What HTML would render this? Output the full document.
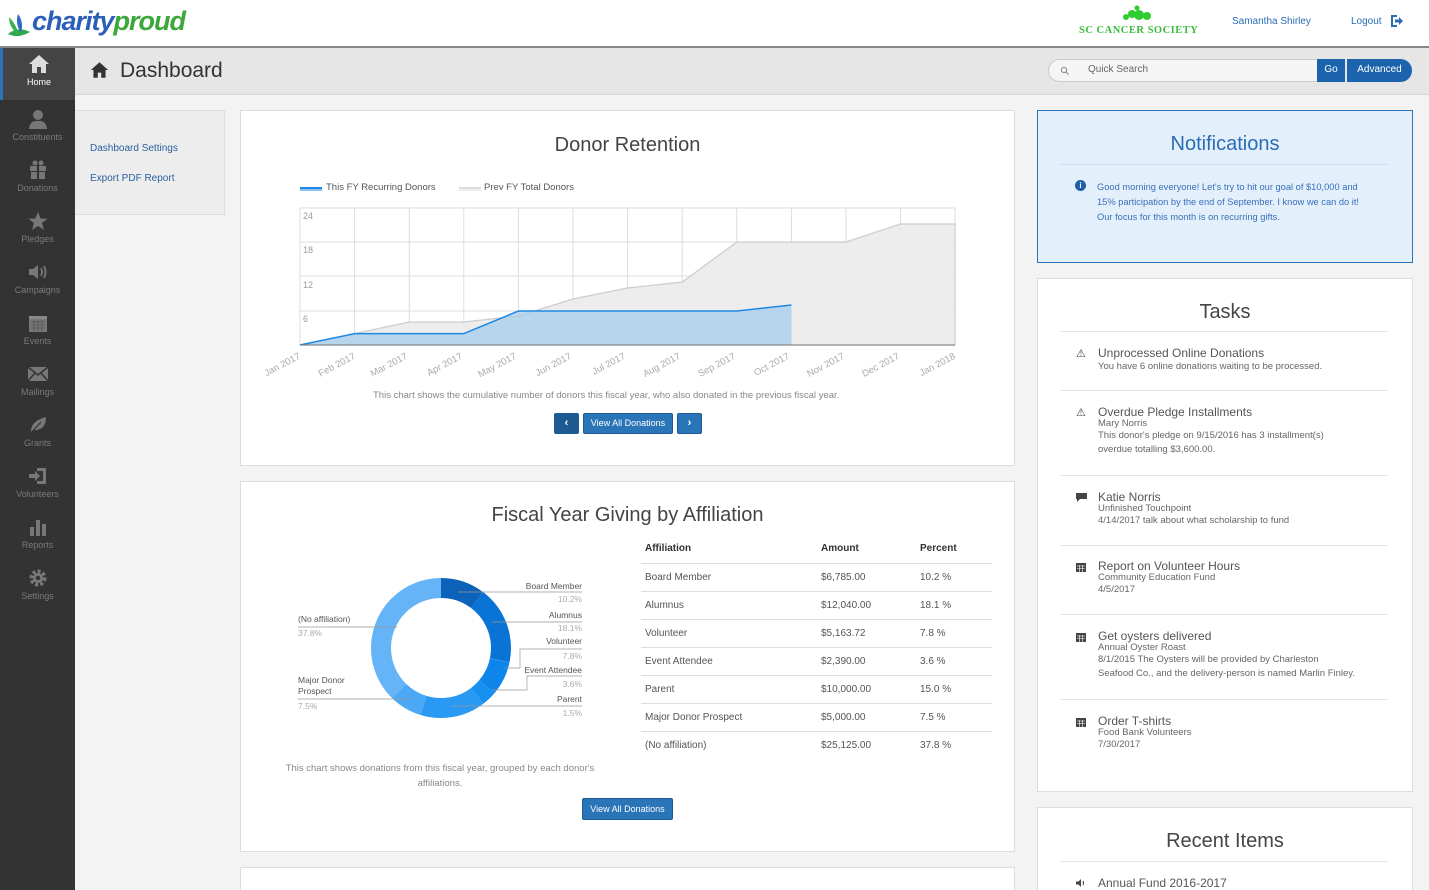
<!DOCTYPE html>
<html><head><meta charset="utf-8"><style>
*{box-sizing:border-box;margin:0;padding:0}
html,body{width:1429px;height:890px;overflow:hidden}
body{background:#f3f3f3;font-family:"Liberation Sans",sans-serif;position:relative;color:#555}
.abs{position:absolute}
#top{left:0;top:0;width:1429px;height:48px;background:#fff;border-bottom:2px solid #888}
#side{left:0;top:48px;width:75px;height:842px;background:#333}
.nav{position:absolute;left:0;width:75px;height:51px;text-align:center;color:#7a7a7a;font-size:9px}
.nav svg{display:block;margin:6px auto 3px}
#tbar{left:75px;top:48px;width:1354px;height:47px;background:#e6e6e6;border-bottom:1px solid #d6d6d6}
.card{position:absolute;background:#fff;border:1px solid #ddd}
h2{font-weight:normal;color:#444;text-align:center}
.btn{position:absolute;background:#2a74b8;color:#fff;font-size:9px;text-align:center;border:1px solid #1e5a92;border-radius:2px}
table{border-collapse:collapse;font-size:10px;color:#555}
td{height:28px;border-top:1px solid #ddd;padding-left:4px}
.task{position:absolute;left:60px;font-size:9.5px;color:#666;line-height:14px}
.task b{font-weight:normal;font-size:12px;color:#555;display:block;line-height:13px}
.ti{position:absolute;left:38px;font-size:11px;color:#444}
.sep{position:absolute;left:22px;width:328px;height:1px;background:#e5e5e5}
</style></head><body>
<div id="top" class="abs">
 <svg class="abs" style="left:6px;top:8px" width="30" height="32" viewBox="0 0 30 32"><path d="M2 26 Q12 18 24 24 Q12 31 2 26Z" fill="#2fa84f"/><path d="M12 6 Q18 14 15 25 Q9 16 12 6Z" fill="#2b6cc4"/><path d="M3 9 Q10 16 13 27 Q3 20 3 9Z" fill="#38b04a"/></svg>
 <div class="abs" style="left:32px;top:6px;font-size:27px;font-weight:bold;font-style:italic;letter-spacing:-1px"><span style="color:#2b5fb8">charity</span><span style="color:#3aa83a">proud</span></div>
 <svg class="abs" style="left:1120px;top:5px" width="36" height="18"><circle cx="6" cy="12" r="3" fill="#2ecc2e"/><circle cx="12" cy="9" r="4" fill="#2ecc2e"/><circle cx="19" cy="10" r="5" fill="#2ecc2e"/><circle cx="27" cy="11" r="4" fill="#2ecc2e"/><circle cx="17" cy="3" r="2.5" fill="#2ecc2e"/></svg>
 <div class="abs" style="left:1079px;top:25px;font-family:'Liberation Serif',serif;font-weight:bold;font-size:10.5px;color:#3bbb3b;letter-spacing:.5px">SC CANCER SOCIETY</div>
 <div class="abs" style="left:1232px;top:16px;font-size:10px;color:#2a6cb5">Samantha Shirley</div>
 <div class="abs" style="left:1351px;top:16px;font-size:10px;color:#2a6cb5">Logout</div>
 <svg class="abs" style="left:1391px;top:15px" width="13" height="12"><path d="M6 1 H1 V11 H6" stroke="#2a6cb5" stroke-width="2" fill="none"/><path d="M4 4.5 H8 V2 L12 6 L8 10 V7.5 H4Z" fill="#2a6cb5"/></svg>
</div>
<div id="side" class="abs">
 <div class="nav" style="top:0;background:#444;border-left:3px solid #2a74b8;color:#fff;height:52px"><svg width="22" height="20" viewBox="0 0 22 20"><path d="M11 1 L1 10 H4 V19 H9 V13 H13 V19 H18 V10 H21Z" fill="#ddd"/></svg>Home</div>
 <div class="nav" style="top:55px"><svg width="20" height="20"><circle cx="10" cy="6" r="5" fill="#777"/><path d="M1 20 Q2 11 10 12 Q18 11 19 20Z" fill="#777"/></svg>Constituents</div>
 <div class="nav" style="top:106px"><svg width="20" height="20"><rect x="2" y="6" width="16" height="5" fill="#777"/><rect x="3" y="12" width="14" height="7" fill="#777"/><rect x="9" y="5" width="2" height="14" fill="#333"/><circle cx="7" cy="3" r="2.5" fill="#777"/><circle cx="13" cy="3" r="2.5" fill="#777"/></svg>Donations</div>
 <div class="nav" style="top:157px"><svg width="20" height="20"><path d="M10 1 L12.6 7.5 L19.5 7.7 L14 12 L16 19 L10 15 L4 19 L6 12 L.5 7.7 L7.4 7.5Z" fill="#777"/></svg>Pledges</div>
 <div class="nav" style="top:208px"><svg width="22" height="20"><path d="M2 7 H6 L11 3 V17 L6 13 H2Z" fill="#777"/><path d="M14 6 Q16 10 14 14 M17 4 Q20 10 17 16" stroke="#777" stroke-width="1.8" fill="none"/></svg>Campaigns</div>
 <div class="nav" style="top:259px"><svg width="20" height="20"><rect x="1" y="3" width="18" height="16" fill="#777"/><rect x="1" y="3" width="18" height="3" fill="#888"/><path d="M3 9H17M3 12H17M3 15H17M6 7V18M10 7V18M14 7V18" stroke="#555" stroke-width=".7"/></svg>Events</div>
 <div class="nav" style="top:310px"><svg width="22" height="20"><rect x="1" y="3" width="20" height="14" fill="#777"/><path d="M1 3 L11 11 L21 3 M1 17 L8 9 M21 17 L14 9" stroke="#333" stroke-width="1.5" fill="none"/></svg>Mailings</div>
 <div class="nav" style="top:361px"><svg width="20" height="20"><path d="M3 18 Q2 6 18 2 Q18 16 5 15" fill="#777"/><path d="M2 19 L13 7" stroke="#333" stroke-width="1.2"/></svg>Grants</div>
 <div class="nav" style="top:412px"><svg width="22" height="20"><path d="M10 2 H19 V18 H10 V15 H16 V5 H10Z" fill="#777"/><path d="M2 8 H8 V5 L13 10 L8 15 V12 H2Z" fill="#777"/></svg>Volunteers</div>
 <div class="nav" style="top:463px"><svg width="20" height="20"><rect x="2" y="10" width="4" height="9" fill="#777"/><rect x="8" y="3" width="4" height="16" fill="#777"/><rect x="14" y="7" width="4" height="12" fill="#777"/></svg>Reports</div>
 <div class="nav" style="top:514px"><svg width="20" height="20"><circle cx="10" cy="10" r="6.5" fill="none" stroke="#777" stroke-width="4" stroke-dasharray="3 2"/><circle cx="10" cy="10" r="5" fill="#777"/><circle cx="10" cy="10" r="2.2" fill="#333"/></svg>Settings</div>
</div>
<div id="tbar" class="abs">
 <svg class="abs" style="left:15px;top:13px" width="19" height="18" viewBox="0 0 22 20"><path d="M11 1 L1 10 H4 V19 H9 V13 H13 V19 H18 V10 H21Z" fill="#333"/></svg>
 <div class="abs" style="left:45px;top:11px;font-size:21px;color:#333">Dashboard</div>
 <div class="abs" style="left:973px;top:11px;width:270px;height:23px;background:#f5f5f5;border:1px solid #ccc;border-radius:12px 0 0 12px"></div>
 <svg class="abs" style="left:985px;top:18px" width="9" height="9"><circle cx="4" cy="4" r="2.6" stroke="#888" fill="none"/><path d="M6 6 L8.5 8.5" stroke="#888"/></svg>
 <div class="abs" style="left:1013px;top:16px;font-size:10px;color:#666">Quick Search</div>
 <div class="abs" style="left:1242px;top:11px;width:28px;height:23px;background:#1c63ad;color:#fff;font-size:10px;text-align:center;line-height:22px">Go</div>
 <div class="abs" style="left:1272px;top:11px;width:65px;height:23px;background:#1c63ad;color:#fff;font-size:10px;text-align:center;line-height:22px;border-radius:0 12px 12px 0">Advanced</div>
</div>
<div class="abs" style="left:75px;top:110px;width:150px;height:105px;background:#ededed;border:1px solid #ddd;border-left:none">
 <div class="abs" style="left:15px;top:32px;font-size:10px;color:#2a5f9e">Dashboard Settings</div>
 <div class="abs" style="left:15px;top:62px;font-size:10px;color:#2a5f9e">Export PDF Report</div>
</div>

<div class="card" style="left:240px;top:110px;width:775px;height:356px">
 <h2 class="abs" style="left:0;width:773px;top:23px;font-size:20px">Donor Retention</h2>
 <div class="abs" style="left:59px;top:76px;width:22px;height:4px;background:#8cc4ee;border-top:2px solid #1e88e5"></div>
 <div class="abs" style="left:85px;top:71px;font-size:9.5px;color:#555">This FY Recurring Donors</div>
 <div class="abs" style="left:218px;top:76px;width:22px;height:4px;background:#eee;border-top:2px solid #ddd"></div>
 <div class="abs" style="left:243px;top:71px;font-size:9.5px;color:#555">Prev FY Total Donors</div>
 <div class="abs" style="left:132px;top:279px;font-size:9.5px;color:#888">This chart shows the cumulative number of donors this fiscal year, who also donated in the previous fiscal year.</div>
 <div class="btn" style="left:313px;top:302px;width:25px;height:21px;line-height:19px;background:#1e5a92;font-size:11px;font-weight:bold">&#8249;</div>
 <div class="btn" style="left:342px;top:302px;width:90px;height:21px;line-height:19px">View All Donations</div>
 <div class="btn" style="left:436px;top:302px;width:25px;height:21px;line-height:19px;font-size:11px;font-weight:bold">&#8250;</div>
</div>
<svg class="abs" style="left:255px;top:200px" width="720" height="190" viewBox="255 200 720 190">
 <g stroke="#ddd" stroke-width="1">
  <line x1="300" y1="208" x2="955" y2="208"/><line x1="300" y1="242" x2="955" y2="242"/><line x1="300" y1="276" x2="955" y2="276"/><line x1="300" y1="311" x2="955" y2="311"/>
  <line x1="300" y1="208" x2="300" y2="345"/><line x1="354.6" y1="208" x2="354.6" y2="345"/><line x1="409.2" y1="208" x2="409.2" y2="345"/><line x1="463.8" y1="208" x2="463.8" y2="345"/><line x1="518.4" y1="208" x2="518.4" y2="345"/><line x1="573" y1="208" x2="573" y2="345"/><line x1="627.6" y1="208" x2="627.6" y2="345"/><line x1="682.2" y1="208" x2="682.2" y2="345"/><line x1="736.8" y1="208" x2="736.8" y2="345"/><line x1="791.4" y1="208" x2="791.4" y2="345"/><line x1="846" y1="208" x2="846" y2="345"/><line x1="900.6" y1="208" x2="900.6" y2="345"/><line x1="955" y1="208" x2="955" y2="345"/>
 </g>
 <path d="M300 345 L354.6 333.6 L409.2 322 L463.8 322 L518.4 316 L573 299 L627.6 288 L682.2 282 L736.8 242 L791.4 242 L846 242 L900.6 224 L955 224 L955 345Z" fill="#ebebeb" fill-opacity=".9" stroke="#ccc" stroke-width="1.2"/>
 <path d="M300 345 L354.6 333.6 L409.2 333.6 L463.8 333.6 L518.4 311 L573 311 L627.6 311 L682.2 311 L736.8 311 L791.4 305 L791.4 345Z" fill="#9fcbec" fill-opacity=".7"/>
 <path d="M300 345 L354.6 333.6 L409.2 333.6 L463.8 333.6 L518.4 311 L573 311 L627.6 311 L682.2 311 L736.8 311 L791.4 305" fill="none" stroke="#1e88e5" stroke-width="1.5"/>
 <line x1="300" y1="345" x2="955" y2="345" stroke="#777" stroke-width="1"/>
 <g font-size="9" fill="#999" font-family="Liberation Sans"><text x="303" y="219">24</text><text x="303" y="253">18</text><text x="303" y="288">12</text><text x="303" y="322">6</text></g>
 <g font-size="9.5" fill="#aaa" font-family="Liberation Sans" text-anchor="end">
  <text transform="translate(301,358) rotate(-28)">Jan 2017</text><text transform="translate(356,358) rotate(-28)">Feb 2017</text><text transform="translate(408,358) rotate(-28)">Mar 2017</text><text transform="translate(463,358) rotate(-28)">Apr 2017</text><text transform="translate(517,358) rotate(-28)">May 2017</text><text transform="translate(572,358) rotate(-28)">Jun 2017</text><text transform="translate(626,358) rotate(-28)">Jul 2017</text><text transform="translate(681,358) rotate(-28)">Aug 2017</text><text transform="translate(736,358) rotate(-28)">Sep 2017</text><text transform="translate(790,358) rotate(-28)">Oct 2017</text><text transform="translate(845,358) rotate(-28)">Nov 2017</text><text transform="translate(900,358) rotate(-28)">Dec 2017</text><text transform="translate(956,358) rotate(-28)">Jan 2018</text>
 </g>
</svg>

<div class="card" style="left:240px;top:481px;width:775px;height:371px">
 <h2 class="abs" style="left:0;width:773px;top:22px;font-size:20px">Fiscal Year Giving by Affiliation</h2>
 <table class="abs" style="left:400px;top:53px;width:351px">
  <tr><td style="border:none;height:26px;font-weight:bold;color:#333;width:176px">Affiliation</td><td style="border:none;font-weight:bold;color:#333;width:99px">Amount</td><td style="border:none;font-weight:bold;color:#333">Percent</td></tr>
  <tr><td>Board Member</td><td>$6,785.00</td><td>10.2 %</td></tr>
  <tr><td>Alumnus</td><td>$12,040.00</td><td>18.1 %</td></tr>
  <tr><td>Volunteer</td><td>$5,163.72</td><td>7.8 %</td></tr>
  <tr><td>Event Attendee</td><td>$2,390.00</td><td>3.6 %</td></tr>
  <tr><td>Parent</td><td>$10,000.00</td><td>15.0 %</td></tr>
  <tr><td>Major Donor Prospect</td><td>$5,000.00</td><td>7.5 %</td></tr>
  <tr><td>(No affiliation)</td><td>$25,125.00</td><td>37.8 %</td></tr>
 </table>
 <div class="abs" style="left:30px;top:279px;width:338px;text-align:center;font-size:9.5px;color:#888;line-height:15px">This chart shows donations from this fiscal year, grouped by each donor's affiliations.</div>
 <div class="btn" style="left:341px;top:316px;width:91px;height:22px;line-height:20px">View All Donations</div>
</div>
<svg class="abs" style="left:290px;top:570px" width="300" height="150" viewBox="290 570 300 150">
 <g transform="rotate(-90 441 648)" fill="none" stroke-width="20">
  <circle cx="441" cy="648" r="60" stroke="#0b62b8" stroke-dasharray="38.45 400" stroke-dashoffset="0"/>
  <circle cx="441" cy="648" r="60" stroke="#0a73d6" stroke-dasharray="68.2 400" stroke-dashoffset="-38.45"/>
  <circle cx="441" cy="648" r="60" stroke="#0d85ea" stroke-dasharray="29.4 400" stroke-dashoffset="-106.7"/>
  <circle cx="441" cy="648" r="60" stroke="#1890f2" stroke-dasharray="13.6 400" stroke-dashoffset="-136.1"/>
  <circle cx="441" cy="648" r="60" stroke="#2999f3" stroke-dasharray="56.5 400" stroke-dashoffset="-149.7"/>
  <circle cx="441" cy="648" r="60" stroke="#4aa8f5" stroke-dasharray="28.3 400" stroke-dashoffset="-206.2"/>
  <circle cx="441" cy="648" r="60" stroke="#64b4f7" stroke-dasharray="142.5 400" stroke-dashoffset="-234.5"/>
 </g>
 <g stroke="#999" stroke-width=".7" fill="none">
  <path d="M458 592 L482 592 L582 592"/><path d="M492 622 L510 622 L582 622"/><path d="M505 668 L520 668 L520 649 L582 649"/><path d="M492 690 L527 690 L527 676 L582 676"/><path d="M452 706 L582 706"/><path d="M298 627 L397 627"/><path d="M298 699 L412 699"/>
 </g>
 <g font-size="8.5" font-family="Liberation Sans" text-anchor="end" fill="#555">
  <text x="582" y="589">Board Member</text><text x="582" y="602" fill="#aaa">10.2%</text>
  <text x="582" y="618">Alumnus</text><text x="582" y="631" fill="#aaa">18.1%</text>
  <text x="582" y="644">Volunteer</text><text x="582" y="659" fill="#aaa">7.8%</text>
  <text x="582" y="673">Event Attendee</text><text x="582" y="687" fill="#aaa">3.6%</text>
  <text x="582" y="702">Parent</text><text x="582" y="716" fill="#aaa">1.5%</text>
 </g>
 <g font-size="8.5" font-family="Liberation Sans" fill="#555">
  <text x="298" y="622">(No affiliation)</text><text x="298" y="636" fill="#aaa">37.8%</text>
  <text x="298" y="683">Major Donor</text><text x="298" y="694">Prospect</text><text x="298" y="709" fill="#aaa">7.5%</text>
 </g>
</svg>
<div class="card" style="left:240px;top:867px;width:775px;height:40px"></div>

<div class="abs" style="left:1037px;top:110px;width:376px;height:153px;background:#e3f0fc;border:1px solid #2a74b8">
 <h2 class="abs" style="left:0;width:374px;top:22px;font-size:20px;color:#2a6cb5">Notifications</h2>
 <div class="abs" style="left:22px;top:53px;width:328px;height:1px;background:#c9dff2"></div>
 <div class="abs" style="left:37px;top:69px;width:11px;height:11px;border-radius:50%;background:#1e5fa8;color:#fff;font-size:8px;text-align:center;line-height:11px;font-weight:bold">i</div>
 <div class="abs" style="left:59px;top:69px;width:272px;font-size:9.3px;color:#3a6fb8;line-height:15px">Good morning everyone! Let's try to hit our goal of $10,000 and 15% participation by the end of September. I know we can do it! Our focus for this month is on recurring gifts.</div>
</div>

<div class="card" style="left:1037px;top:278px;width:376px;height:514px">
 <h2 class="abs" style="left:0;width:374px;top:22px;font-size:20px">Tasks</h2>
 <div class="sep" style="top:52px"></div>
 <div class="ti" style="top:68px">&#9888;</div>
 <div class="task" style="top:68px"><b>Unprocessed Online Donations</b>You have 6 online donations waiting to be processed.</div>
 <div class="sep" style="top:111px"></div>
 <div class="ti" style="top:127px">&#9888;</div>
 <div class="task" style="top:127px"><b>Overdue Pledge Installments</b><span style="line-height:10px;display:block">Mary Norris</span>This donor's pledge on 9/15/2016 has 3 installment(s)<br>overdue totalling $3,600.00.</div>
 <div class="sep" style="top:196px"></div>
 <svg class="ti" style="top:214px" width="11" height="9"><path d="M0 0 H11 V6 H4 L1 9 V6 H0Z" fill="#444"/></svg>
 <div class="task" style="top:212px"><b>Katie Norris</b><span style="line-height:10px;display:block">Unfinished Touchpoint</span>4/14/2017 talk about what scholarship to fund</div>
 <div class="sep" style="top:266px"></div>
 <svg class="ti" style="top:283px" width="10" height="10"><rect x="0" y="1" width="10" height="9" fill="#444"/><path d="M1 4H9M1 6.5H9M3.5 3V10M6.5 3V10" stroke="#fff" stroke-width=".6"/></svg>
 <div class="task" style="top:281px"><b>Report on Volunteer Hours</b><span style="line-height:10px;display:block">Community Education Fund</span>4/5/2017</div>
 <div class="sep" style="top:335px"></div>
 <svg class="ti" style="top:353px" width="10" height="10"><rect x="0" y="1" width="10" height="9" fill="#444"/><path d="M1 4H9M1 6.5H9M3.5 3V10M6.5 3V10" stroke="#fff" stroke-width=".6"/></svg>
 <div class="task" style="top:351px"><b>Get oysters delivered</b><span style="line-height:10px;display:block">Annual Oyster Roast</span>8/1/2015 The Oysters will be provided by Charleston<br>Seafood Co., and the delivery-person is named Marlin Finley.</div>
 <div class="sep" style="top:420px"></div>
 <svg class="ti" style="top:438px" width="10" height="10"><rect x="0" y="1" width="10" height="9" fill="#444"/><path d="M1 4H9M1 6.5H9M3.5 3V10M6.5 3V10" stroke="#fff" stroke-width=".6"/></svg>
 <div class="task" style="top:436px"><b>Order T-shirts</b><span style="line-height:10px;display:block">Food Bank Volunteers</span>7/30/2017</div>
</div>

<div class="card" style="left:1037px;top:807px;width:376px;height:100px">
 <h2 class="abs" style="left:0;width:374px;top:22px;font-size:20px">Recent Items</h2>
 <div class="sep" style="top:53px"></div>
 <svg class="ti" style="top:71px" width="10" height="8"><path d="M0 2.5H2.5L5 0V8L2.5 5.5H0Z" fill="#444"/><path d="M7 2Q8 4 7 6" stroke="#444" fill="none"/></svg>
 <div class="task" style="top:69px"><b>Annual Fund 2016-2017</b></div>
</div>
</body></html>
